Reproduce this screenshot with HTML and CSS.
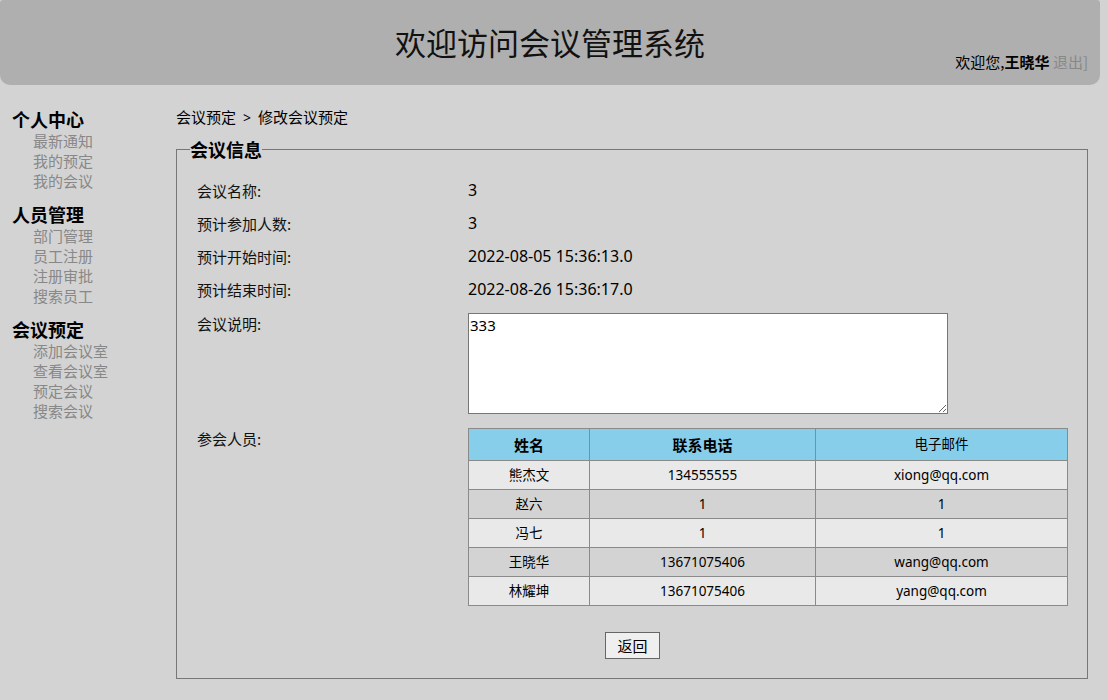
FILE: index.html
```html
<!DOCTYPE html>
<html lang="zh-CN">
<head>
<meta charset="utf-8">
<title>会议管理系统</title>
<link rel="stylesheet" href="styles.css">
</head>
<body>
<header class="top">
  <h1 class="title">欢迎访问会议管理系统</h1>
  <div class="user">欢迎您,<b>王晓华</b> <a class="logout" href="#">退出]</a></div>
</header>
<div class="layout">
  <nav class="side">
    <div class="group">
      <div class="group-title">个人中心</div>
      <a class="item" href="#">最新通知</a>
      <a class="item" href="#">我的预定</a>
      <a class="item" href="#">我的会议</a>
    </div>
    <div class="group">
      <div class="group-title">人员管理</div>
      <a class="item" href="#">部门管理</a>
      <a class="item" href="#">员工注册</a>
      <a class="item" href="#">注册审批</a>
      <a class="item" href="#">搜索员工</a>
    </div>
    <div class="group">
      <div class="group-title">会议预定</div>
      <a class="item" href="#">添加会议室</a>
      <a class="item" href="#">查看会议室</a>
      <a class="item" href="#">预定会议</a>
      <a class="item" href="#">搜索会议</a>
    </div>
  </nav>
  <main class="content">
    <div class="crumb">会议预定<span class="sep">&gt;</span>修改会议预定</div>
    <fieldset class="box">
      <legend class="legend">会议信息</legend>
      <div class="form">
        <div class="label">会议名称:</div><div class="value">3</div>
        <div class="label">预计参加人数:</div><div class="value">3</div>
        <div class="label">预计开始时间:</div><div class="value">2022-08-05 15:36:13.0</div>
        <div class="label">预计结束时间:</div><div class="value">2022-08-26 15:36:17.0</div>
        <div class="label mid">会议说明:</div><div class="value mid"><textarea class="desc">333</textarea></div>
        <div class="label tall">参会人员:</div>
        <div class="value tall">
          <table class="people">
            <thead>
              <tr><th class="c1">姓名</th><th class="c2">联系电话</th><td class="c3">电子邮件</td></tr>
            </thead>
            <tbody>
              <tr><td>熊杰文</td><td>134555555</td><td>xiong@qq.com</td></tr>
              <tr><td>赵六</td><td>1</td><td>1</td></tr>
              <tr><td>冯七</td><td>1</td><td>1</td></tr>
              <tr><td>王晓华</td><td>13671075406</td><td>wang@qq.com</td></tr>
              <tr><td>林耀坤</td><td>13671075406</td><td>yang@qq.com</td></tr>
            </tbody>
          </table>
        </div>
      </div>
      <div class="actions"><button class="btn" type="button">返回</button></div>
    </fieldset>
  </main>
</div>
</body>
</html>
```

FILE: styles.css
```css
html, body {
  margin: 0;
  padding: 0;
}
body {
  background: #d3d3d3;
  font-family: "Noto Sans", "Noto Sans CJK SC", sans-serif;
  font-size: 15px;
  color: #000;
  width: 1108px;
  height: 700px;
  overflow: hidden;
}
.top {
  width: 1100px;
  height: 85px;
  background: #afafaf;
  border-radius: 3px 3px 10px 10px;
  display: grid;
}
.title {
  grid-area: 1 / 1;
  margin: 0;
  align-self: start;
  padding-top: 21px;
  text-align: center;
  font-weight: normal;
  font-size: 31px;
  line-height: 42px;
  font-family: "Noto Sans CJK SC", sans-serif;
  color: #111;
}
.user {
  grid-area: 1 / 1;
  align-self: end;
  justify-self: end;
  padding: 0 12px 13px 0;
  font-size: 15px;
  line-height: 20px;
  font-family: "Noto Sans CJK SC", sans-serif;
}
.user b {
  font-weight: bold;
}
.logout {
  color: #888;
  text-decoration: none;
}
.layout {
  display: flex;
}
.side {
  width: 176px;
  flex: none;
  padding-top: 11px;
  font-family: "Noto Sans CJK SC", sans-serif;
}
.group {
  margin-top: 11px;
  display: flex;
  flex-direction: column;
}
.group-title {
  padding-left: 12px;
  font-size: 18px;
  font-weight: bold;
  line-height: 24px;
}
.item {
  padding-left: 33px;
  font-size: 15px;
  line-height: 20px;
  color: #888;
  text-decoration: none;
}
.content {
  width: 912px;
  flex: none;
}
.crumb {
  margin-top: 22px;
  line-height: 20px;
  font-size: 15px;
  font-family: "Noto Sans CJK SC", sans-serif;
}
.sep {
  display: inline-block;
  margin: 0 7px;
  font-family: "Noto Sans", sans-serif;
  font-size: 14px;
}
.box {
  margin: 10px 0 0 0;
  padding: 0 19px 19px 20px;
  border: 1px solid #777;
  min-width: 0;
}
.legend {
  padding: 0;
  margin-left: -7px;
  font-size: 18px;
  font-weight: bold;
  line-height: 23px;
  font-family: "Noto Sans CJK SC", sans-serif;
}
.form {
  display: grid;
  grid-template-columns: 271px 1fr;
  margin-top: 13px;
}
.label, .value {
  padding: 6px 0;
  line-height: 21px;
}
.label {
  font-family: "Noto Sans CJK SC", sans-serif;
  color: #111;
}
.value {
  font-size: 16px;
}
.mid {
  padding-top: 7px;
}
.tall {
  padding-top: 8px;
}
.desc {
  display: block;
  width: 480px;
  height: 101px;
  box-sizing: border-box;
  margin: 0;
  padding: 2px 1px;
  border: 1px solid #767676;
  background: #fff;
  font-family: "Noto Sans", "Noto Sans CJK SC", sans-serif;
  font-size: 15px;
  line-height: 18px;
  resize: both;
}
.people {
  border-collapse: collapse;
  width: 600px;
  text-align: center;
  font-size: 13.5px;
}
.people th, .people td {
  border: 1px solid #8a8a8a;
  padding: 0;
  font-weight: normal;
  height: 28px;
}
.people thead th, .people thead td {
  background: #87ceeb;
  height: 31px;
}
.people th {
  font-weight: bold;
  font-size: 15px;
  font-family: "Noto Sans CJK SC", sans-serif;
}
.c1 { width: 120px; }
.c2 { width: 225px; }
.people tbody tr:nth-child(odd) td {
  background: #e9e9e9;
}
.people tbody tr:nth-child(even) td {
  background: #d3d3d3;
}
.actions {
  display: flex;
  justify-content: center;
  margin-top: 20px;
}
.btn {
  width: 55px;
  height: 27px;
  padding: 0;
  background: #efefef;
  border: 1px solid #666;
  border-radius: 0;
  font-family: "Noto Sans CJK SC", sans-serif;
  font-size: 15px;
  color: #000;
}
```
